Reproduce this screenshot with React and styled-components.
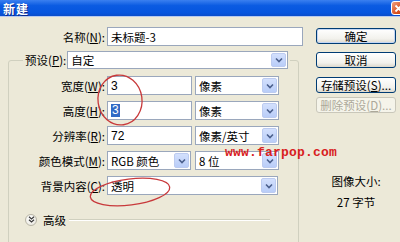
import React from 'react';
import styled, { createGlobalStyle } from 'styled-components';

const Global = createGlobalStyle`
  html, body { margin: 0; padding: 0; background: #ECE9D8; }
  body {
    width: 400px; height: 242px; overflow: hidden;
    font-family: "Noto Sans CJK SC", "Liberation Sans", sans-serif;
    font-size: 11.5px; color: #000;
  }
`;

const Window = styled.div`
  position: relative;
  width: 400px;
  height: 242px;
  overflow: hidden;
  background: #ECE9D8;
  display: flex;
  flex-direction: column;
`;

const TitleBar = styled.div`
  flex: none;
  height: 17px;
  box-sizing: border-box;
  background: linear-gradient(#3b80f0, #0b5be2 35%, #0655de 80%, #0a4dca);
  border-bottom: 1px solid #b7c9ee;
  display: flex;
  align-items: center;
  justify-content: space-between;
  padding-left: 3px;
`;

const TitleText = styled.span`
  color: #fff;
  font-weight: bold;
  font-size: 12px;
  letter-spacing: 1px;
  text-shadow: 1px 1px 0 #0a2a8a;
`;

const CloseBtn = styled.div`
  width: 15px;
  height: 14px;
  margin-right: -6px;
  box-sizing: border-box;
  border: 1px solid #fff;
  border-radius: 3px;
  background: linear-gradient(135deg, #f0a080, #d9501e 60%, #c4400f);
  display: flex;
  align-items: center;
  justify-content: center;
`;

const Body = styled.div`
  flex: 1;
  display: flex;
`;

const LeftCol = styled.div`
  width: 300px;
  flex: none;
  display: flex;
  flex-direction: column;
`;

const Row = styled.div`
  display: flex;
  align-items: center;
  height: 19px;
  margin-top: ${p => p.$mt || 0}px;
`;

const Label = styled.label`
  width: ${p => p.$w}px;
  flex: none;
  text-align: right;
  padding-right: 2px;
  white-space: nowrap;
`;

const U = styled.span`
  text-decoration: underline;
`;

const TextBox = styled.div`
  width: ${p => p.$w}px;
  height: 19px;
  flex: none;
  box-sizing: border-box;
  border: 1px solid #9aa7bc;
  background: #fff;
  padding-left: 3px;
  display: flex;
  align-items: center;
  font-family: "Liberation Sans", "Noto Sans CJK SC", sans-serif;
  font-size: 12px;
`;

const CjkText = styled.span`
  font-family: "Noto Sans CJK SC", sans-serif;
  font-size: 11.5px;
`;

const Sel = styled.span`
  background: #316ac5;
  color: #fff;
  padding: 0 1px;
  line-height: 13px;
`;

const SelectBox = styled.div`
  width: ${p => p.$w}px;
  height: ${p => p.$h || 19}px;
  margin-left: ${p => p.$ml || 0}px;
  flex: none;
  box-sizing: border-box;
  border: 1px solid #9aa7bc;
  background: #fff;
  display: flex;
  align-items: center;
  padding: 1px;
`;

const SelectText = styled.span`
  flex: 1;
  padding-left: 2px;
  white-space: nowrap;
`;

const DropBtn = styled.div`
  width: 15px;
  align-self: stretch;
  box-sizing: border-box;
  border: 1px solid #bccbf0;
  border-radius: 2px;
  background: linear-gradient(#d3e0fd, #b9cdf8);
  display: flex;
  align-items: center;
  justify-content: center;
`;

const Chevron = () => (
  <svg width="8" height="6" viewBox="0 0 8 6">
    <path d="M1 1.5 L4 4.5 L7 1.5" fill="none" stroke="#4a5f8c" strokeWidth="1.6" />
  </svg>
);

const Select = ({ w, h, ml, children }) => (
  <SelectBox $w={w} $h={h} $ml={ml}>
    <SelectText>{children}</SelectText>
    <DropBtn><Chevron /></DropBtn>
  </SelectBox>
);

const Group = styled.fieldset`
  margin: 5px 0 0 8px;
  width: 291px;
  height: 200px;
  box-sizing: border-box;
  padding: 0;
  border: 1px solid #d0d0bf;
  border-radius: 3px;
  min-width: 0;
`;

const Legend = styled.legend`
  margin-left: 14px;
  padding: 0 2px;
  display: flex;
  align-items: center;
  height: 18px;
`;

const LegendLabel = styled.span`
  white-space: nowrap;
  margin-right: 1px;
`;

const Rows = styled.div`
  display: flex;
  flex-direction: column;
  gap: 6px;
  padding-top: 7px;
`;

const AdvRow = styled.div`
  display: flex;
  align-items: center;
  height: 13px;
  margin-top: 18px;
  padding-left: 16px;
  padding-right: 28px;
`;

const RoundBtn = styled.div`
  width: 12px;
  height: 12px;
  box-sizing: border-box;
  border-radius: 50%;
  border: 1px solid #b8b5a6;
  background: radial-gradient(circle at 40% 35%, #fff, #e6e4da);
  display: flex;
  align-items: center;
  justify-content: center;
`;

const AdvText = styled.span`
  margin-left: 6px;
  margin-right: 3px;
`;

const AdvLine = styled.div`
  flex: 1;
  height: 1px;
  background: #d0d0bf;
  border-bottom: 1px solid #fff;
`;

const RightCol = styled.div`
  flex: 1;
  display: flex;
  flex-direction: column;
  padding-left: 16px;
  padding-top: 11px;
`;

const Button = styled.div`
  width: 80px;
  height: 16px;
  margin-top: ${p => p.$mt || 0}px;
  box-sizing: border-box;
  border: 1px solid ${p => (p.$disabled ? '#c9c7ba' : '#003c74')};
  border-radius: 3px;
  background: ${p => (p.$disabled ? '#f5f4ea' : 'linear-gradient(#ffffff, #f2f1ec 70%, #dcd8cc)')};
  color: ${p => (p.$disabled ? '#aca899' : '#000')};
  box-shadow: ${p => (p.$default ? 'inset 0 0 0 1px #c3d6f5' : 'none')};
  display: flex;
  align-items: center;
  justify-content: center;
  white-space: nowrap;
`;

const Info = styled.div`
  margin-top: 58px;
  width: 80px;
  text-align: center;
  line-height: 21px;
`;

const Watermark = styled.div`
  position: absolute;
  left: 225px;
  top: 145px;
  font-family: "Liberation Mono", monospace;
  font-weight: bold;
  font-size: 13px;
  color: #d82020;
  letter-spacing: 0.2px;
  pointer-events: none;
`;

const Annotations = styled.svg`
  position: absolute;
  left: 0;
  top: 0;
  pointer-events: none;
`;

export default function App() {
  return (
    <>
      <Global />
      <Window>
        <TitleBar>
          <TitleText>新建</TitleText>
          <CloseBtn>
            <svg width="9" height="9" viewBox="0 0 9 9">
              <path d="M1.5 1.5 L7.5 7.5 M7.5 1.5 L1.5 7.5" stroke="#fff" strokeWidth="1.8" />
            </svg>
          </CloseBtn>
        </TitleBar>
        <Body>
          <LeftCol>
            <Row $mt={10}>
              <Label $w={105}>名称(<U>N</U>):</Label>
              <TextBox $w={196}>
                <CjkText>未标题-3</CjkText>
              </TextBox>
            </Row>
            <Group>
              <Legend>
                <LegendLabel>预设(<U>P</U>):</LegendLabel>
                <Select w={221} h={18}>自定</Select>
              </Legend>
              <Rows>
                <Row>
                  <Label $w={96}>宽度(<U>W</U>):</Label>
                  <TextBox $w={85}>3</TextBox>
                  <Select w={84} ml={3}>像素</Select>
                </Row>
                <Row>
                  <Label $w={96}>高度(<U>H</U>):</Label>
                  <TextBox $w={85}><Sel>3</Sel></TextBox>
                  <Select w={84} ml={3}>像素</Select>
                </Row>
                <Row>
                  <Label $w={96}>分辨率(<U>R</U>):</Label>
                  <TextBox $w={85}>72</TextBox>
                  <Select w={84} ml={3}>像素/英寸</Select>
                </Row>
                <Row>
                  <Label $w={96}>颜色模式(<U>M</U>):</Label>
                  <Select w={84}>RGB 颜色</Select>
                  <Select w={84} ml={4}>8 位</Select>
                </Row>
                <Row>
                  <Label $w={96}>背景内容(<U>C</U>):</Label>
                  <Select w={171}>透明</Select>
                </Row>
              </Rows>
              <AdvRow>
                <RoundBtn>
                  <svg width="7" height="7" viewBox="0 0 7 7">
                    <path d="M1 0.8 L3.5 3 L6 0.8 M1 3.8 L3.5 6 L6 3.8" fill="none" stroke="#3a3a3a" strokeWidth="1.2" />
                  </svg>
                </RoundBtn>
                <AdvText>高级</AdvText>
                <AdvLine />
              </AdvRow>
            </Group>
          </LeftCol>
          <RightCol>
            <Button $default>确定</Button>
            <Button $mt={8}>取消</Button>
            <Button $mt={9}>存储预设(<U>S</U>)...</Button>
            <Button $mt={4} $disabled>删除预设(<U>D</U>)...</Button>
            <Info>
              <div>图像大小:</div>
              <div>27 字节</div>
            </Info>
          </RightCol>
        </Body>
        <Watermark>www.farpop.com</Watermark>
        <Annotations width="400" height="242" viewBox="0 0 400 242">
          <ellipse cx="120" cy="100" rx="22" ry="25" transform="rotate(-8 120 100)" fill="none" stroke="#c8393b" strokeWidth="1.3" />
          <ellipse cx="130" cy="192" rx="40" ry="13" transform="rotate(-7 130 192)" fill="none" stroke="#c8393b" strokeWidth="1.3" />
        </Annotations>
      </Window>
    </>
  );
}
